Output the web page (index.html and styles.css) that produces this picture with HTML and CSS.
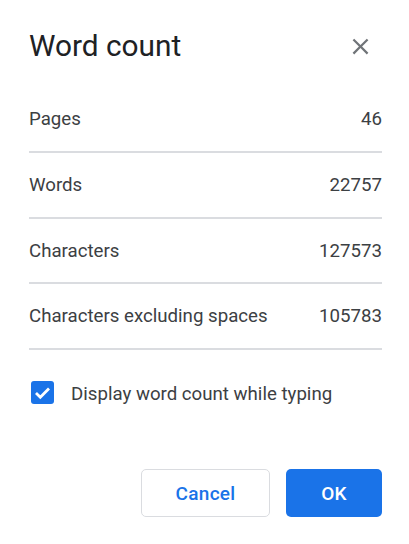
FILE: index.html
```html
<!DOCTYPE html>
<html lang="en">
<head>
<meta charset="utf-8">
<title>Word count</title>
<link rel="stylesheet" href="styles.css">
</head>
<body>
<div class="dialog">
  <div class="header">
    <h1 class="title">Word count</h1>
    <button class="close" aria-label="Close">
      <svg width="27" height="27" viewBox="0 0 24 24"><path fill="#707478" d="M19 6.41L17.59 5 12 10.59 6.41 5 5 6.41 10.59 12 5 17.59 6.41 19 12 13.41 17.59 19 19 17.59 13.41 12z"/></svg>
    </button>
  </div>
  <div class="rows">
    <div class="row"><span>Pages</span><span>46</span></div>
    <div class="row"><span>Words</span><span>22757</span></div>
    <div class="row"><span>Characters</span><span>127573</span></div>
    <div class="row"><span>Characters excluding spaces</span><span>105783</span></div>
  </div>
  <label class="check">
    <span class="box">
      <svg width="23" height="23" viewBox="0 0 23 23"><path d="M5 12 L9.3 16.2 L18 7.4" fill="none" stroke="#fff" stroke-width="2.8"/></svg>
    </span>
    <span class="check-label">Display word count while typing</span>
  </label>
  <div class="actions">
    <button class="btn btn-cancel">Cancel</button>
    <button class="btn btn-ok">OK</button>
  </div>
</div>
</body>
</html>
```

FILE: styles.css
```css
html, body {
  margin: 0;
  padding: 0;
  background: #fff;
}
body {
  font-family: Roboto, "Liberation Sans", Arial, sans-serif;
  color: #3c4043;
}
.dialog {
  padding: 0 27px 0 29px;
}
.header {
  display: flex;
  align-items: center;
  justify-content: space-between;
  padding-top: 22px;
  height: 48px;
  margin-bottom: 17.3px;
}
.title {
  margin: 0;
  font-size: 29.8px;
  font-weight: 400;
  color: #202124;
  line-height: 48px;
}
.close {
  border: 0;
  background: none;
  padding: 0;
  margin: 0 8px 0 0;
  width: 27px;
  height: 27px;
  display: flex;
}
.row {
  display: flex;
  justify-content: space-between;
  align-items: center;
  height: 63.7px;
  border-bottom: 2px solid #dadce0;
  font-size: 18.67px;
  color: #3c4043;
}
.check {
  display: flex;
  align-items: center;
  margin-top: 31px;
  padding-left: 2px;
  height: 23px;
}
.box {
  width: 23px;
  height: 23px;
  border-radius: 3px;
  background: #1a73e8;
  display: flex;
}
.check-label {
  margin-left: 17px;
  font-size: 18.67px;
  color: #3c4043;
  position: relative;
  top: 1px;
}
.actions {
  display: flex;
  justify-content: flex-end;
  gap: 16px;
  margin-top: 65px;
}
.btn {
  height: 48px;
  border-radius: 5px;
  font-family: Roboto, "Liberation Sans", Arial, sans-serif;
  font-size: 19px;
  font-weight: 500;
  letter-spacing: 0.3px;
  padding: 0;
}
.btn-cancel {
  width: 129px;
  background: #fff;
  border: 1px solid #dadce0;
  color: #1a73e8;
}
.btn-ok {
  width: 96px;
  background: #1a73e8;
  border: 0;
  color: #fff;
}
```
